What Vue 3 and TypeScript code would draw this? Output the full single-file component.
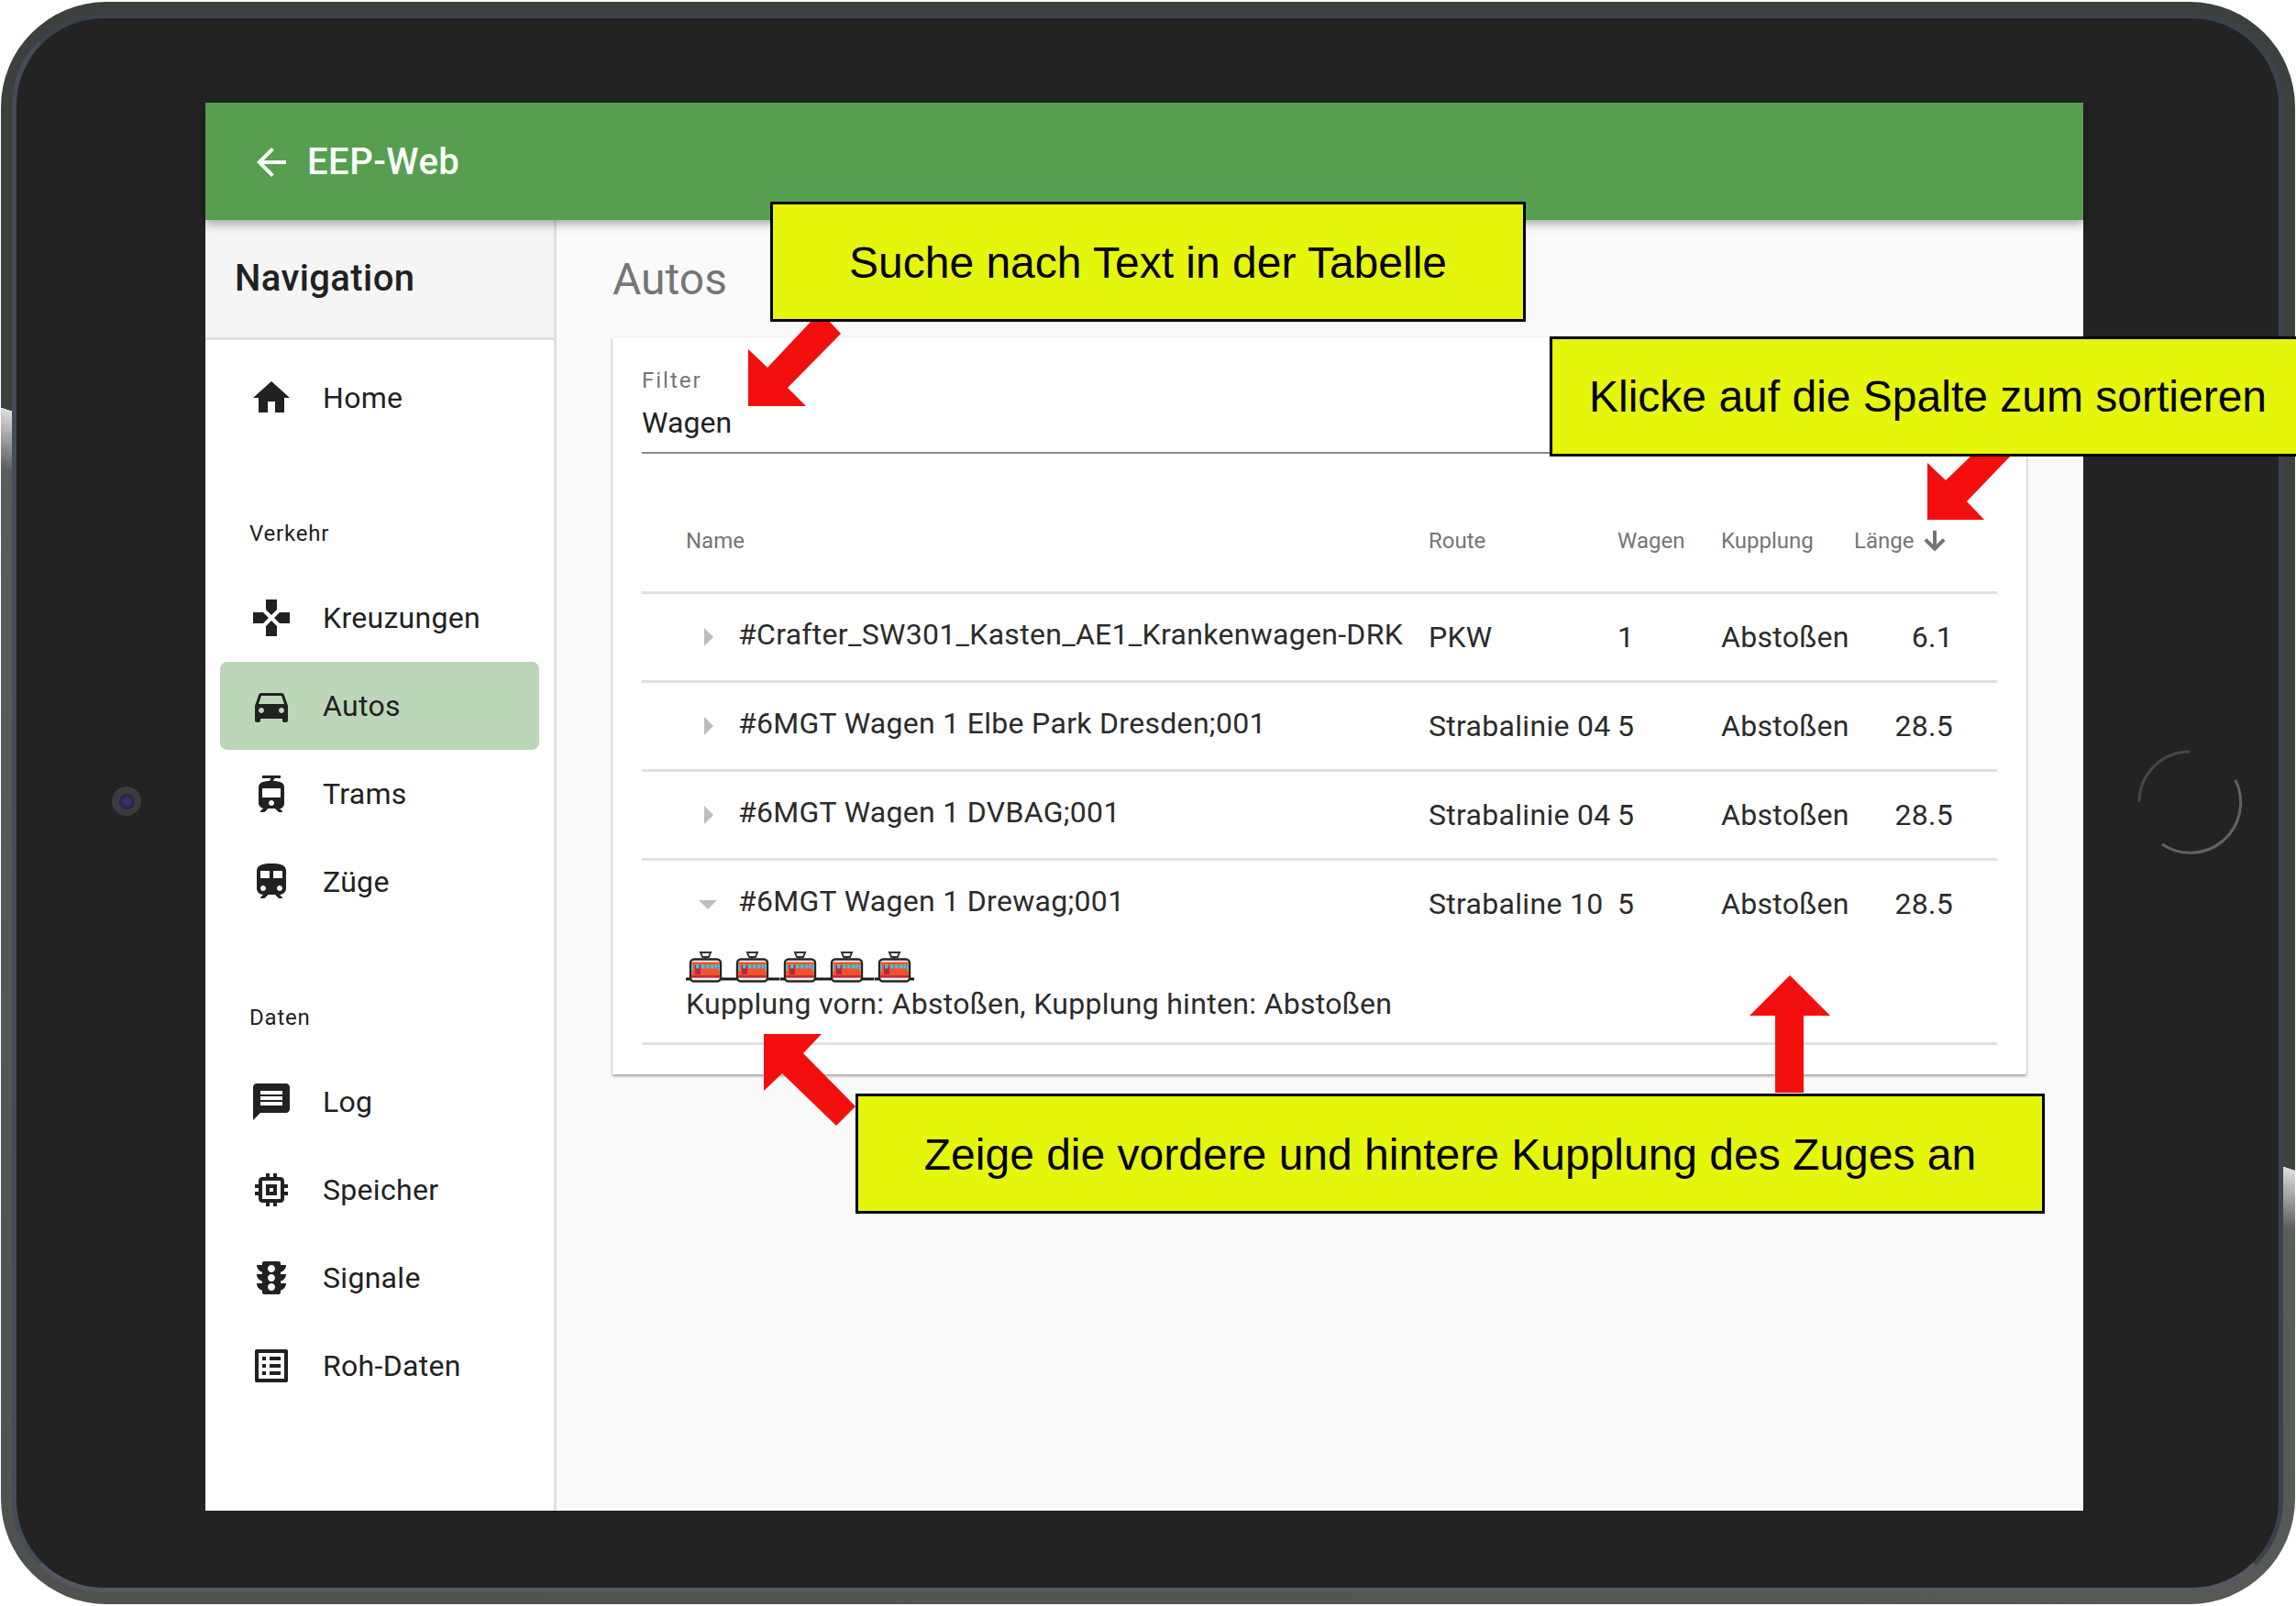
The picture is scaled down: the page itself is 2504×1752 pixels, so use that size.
<script setup lang="ts">
interface NavItem { label: string; path: string; active?: boolean }
interface Row { name: string; route: string; wagen: string; kupplung: string; laenge: string; open?: boolean }

const home: NavItem[] = [{ label: 'Home', path: 'M10 20v-6h4v6h5v-8h3L12 3 2 12h3v8z' }]
const verkehr: NavItem[] = [
  { label: 'Kreuzungen', path: 'M15 7.5V2H9v5.5l3 3 3-3zM7.5 9H2v6h5.5l3-3-3-3zM9 16.5V22h6v-5.5l-3-3-3 3zM16.5 9l-3 3 3 3H22V9h-5.5z' },
  { label: 'Autos', active: true, path: 'M18.92 6.01C18.72 5.42 18.16 5 17.5 5h-11c-.66 0-1.21.42-1.42 1.01L3 12v8c0 .55.45 1 1 1h1c.55 0 1-.45 1-1v-1h12v1c0 .55.45 1 1 1h1c.55 0 1-.45 1-1v-8l-2.08-5.99zM6.5 16c-.83 0-1.5-.67-1.5-1.5S5.67 13 6.5 13s1.5.67 1.5 1.5S7.33 16 6.5 16zm11 0c-.83 0-1.5-.67-1.5-1.5s.67-1.5 1.5-1.5 1.5.67 1.5 1.5-.67 1.5-1.5 1.5zM5 11l1.5-4.5h11L19 11H5z' },
  { label: 'Trams', path: 'M19 16.94V8.5c0-2.79-2.61-3.4-6.01-3.49l.76-1.51H17V2H7v1.5h4.75l-.76 1.52C7.86 5.11 5 5.73 5 8.5v8.44c0 1.45 1.19 2.66 2.59 2.97L6 21.5v.5h2.23l2-2H14l2 2h2v-.5L16.5 20h-.08c1.69 0 2.58-1.37 2.58-3.06zm-7 1.56c-.83 0-1.5-.67-1.5-1.5s.67-1.5 1.5-1.5 1.5.67 1.5 1.5-.67 1.5-1.5 1.5zm5-4.5H7V9h10v5z' },
  { label: 'Züge', path: 'M12 2c-4 0-8 .5-8 4v9.5C4 17.43 5.57 19 7.5 19L6 20.5v.5h2.23l2-2H14l2 2h2v-.5L16.5 19c1.93 0 3.5-1.57 3.5-3.5V6c0-3.5-3.58-4-8-4zM7.5 17c-.83 0-1.5-.67-1.5-1.5S6.67 14 7.5 14s1.5.67 1.5 1.5S8.33 17 7.5 17zm3.5-7H6V6h5v4zm2 0V6h5v4h-5zm3.5 7c-.83 0-1.5-.67-1.5-1.5s.67-1.5 1.5-1.5 1.5.67 1.5 1.5-.67 1.5-1.5 1.5z' },
]
const daten: NavItem[] = [
  { label: 'Log', path: 'M20 2H4c-1.1 0-1.99.9-1.99 2L2 22l4-4h14c1.1 0 2-.9 2-2V4c0-1.1-.9-2-2-2zm-2 12H6v-2h12v2zm0-3H6V9h12v2zm0-3H6V6h12v2z' },
  { label: 'Speicher', path: 'M15 9H9v6h6V9zm-2 4h-2v-2h2v2zm8-2V9h-2V7c0-1.1-.9-2-2-2h-2V3h-2v2h-2V3H9v2H7c-1.1 0-2 .9-2 2v2H3v2h2v2H3v2h2v2c0 1.1.9 2 2 2h2v2h2v-2h2v2h2v-2h2c1.1 0 2-.9 2-2v-2h2v-2h-2v-2h2zm-4 6H7V7h10v10z' },
  { label: 'Signale', path: 'M20 10h-3V8.86c1.72-.45 3-2 3-3.86h-3V4c0-.55-.45-1-1-1H8c-.55 0-1 .45-1 1v1H4c0 1.86 1.28 3.41 3 3.86V10H4c0 1.86 1.28 3.41 3 3.86V15H4c0 1.86 1.28 3.41 3 3.86V20c0 .55.45 1 1 1h8c.55 0 1-.45 1-1v-1.14c1.72-.45 3-2 3-3.86h-3v-1.14c1.72-.45 3-2 3-3.86zm-8 9c-1.11 0-2-.9-2-2s.89-2 2-2c1.1 0 2 .9 2 2s-.89 2-2 2zm0-5c-1.11 0-2-.9-2-2s.89-2 2-2c1.1 0 2 .9 2 2s-.89 2-2 2zm0-5c-1.11 0-2-.9-2-2 0-1.11.89-2 2-2 1.1 0 2 .89 2 2 0 1.1-.89 2-2 2z' },
  { label: 'Roh-Daten', path: 'M19 5v14H5V5h14m1.1-2H3.9c-.5 0-.9.4-.9.9v16.2c0 .4.4.9.9.9h16.2c.4 0 .9-.5.9-.9V3.9c0-.5-.5-.9-.9-.9zM11 7h6v2h-6V7zm0 4h6v2h-6v-2zm0 4h6v2h-6zM7 7h2v2H7zm0 4h2v2H7zm0 4h2v2H7z' },
]
const rows: Row[] = [
  { name: '#Crafter_SW301_Kasten_AE1_Krankenwagen-DRK', route: 'PKW', wagen: '1', kupplung: 'Abstoßen', laenge: '6.1' },
  { name: '#6MGT Wagen 1 Elbe Park Dresden;001', route: 'Strabalinie 04', wagen: '5', kupplung: 'Abstoßen', laenge: '28.5' },
  { name: '#6MGT Wagen 1 DVBAG;001', route: 'Strabalinie 04', wagen: '5', kupplung: 'Abstoßen', laenge: '28.5' },
  { name: '#6MGT Wagen 1 Drewag;001', route: 'Strabaline 10', wagen: '5', kupplung: 'Abstoßen', laenge: '28.5', open: true },
]
const trams = [0, 1, 2, 3, 4]
</script>

<template>
  <div class="page">
    <div class="device">
      <div class="bezel">
        <span class="camera"><span class="lens"></span></span>
        <svg class="home-button" width="120" height="120" viewBox="0 0 120 120">
          <path d="M5 60A55 55 0 0 1 60 5" fill="none" stroke="#474747" stroke-width="3" />
          <path d="M110 36A55 55 0 0 1 30 106" fill="none" stroke="#626262" stroke-width="3" />
        </svg>
        <div class="screen">
          <header class="appbar">
            <svg class="appbar-icon" viewBox="0 0 24 24"><path d="M20 11H7.83l5.59-5.59L12 4l-8 8 8 8 1.41-1.41L7.83 13H20v-2z" /></svg>
            <span class="appbar-title">EEP-Web</span>
          </header>
          <div class="body">
            <aside class="sidebar">
              <div class="nav-head">Navigation</div>
              <ul class="nav-list first">
                <li v-for="item in home" :key="item.label" class="nav-item">
                  <svg class="nav-icon" viewBox="0 0 24 24"><path :d="item.path" /></svg>
                  <span>{{ item.label }}</span>
                </li>
              </ul>
              <div class="nav-sub">Verkehr</div>
              <ul class="nav-list">
                <li v-for="item in verkehr" :key="item.label" class="nav-item" :class="{ active: item.active }">
                  <svg class="nav-icon" viewBox="0 0 24 24"><path :d="item.path" /></svg>
                  <span>{{ item.label }}</span>
                </li>
              </ul>
              <div class="nav-sub">Daten</div>
              <ul class="nav-list">
                <li v-for="item in daten" :key="item.label" class="nav-item">
                  <svg class="nav-icon" viewBox="0 0 24 24"><path :d="item.path" /></svg>
                  <span>{{ item.label }}</span>
                </li>
              </ul>
            </aside>
            <main class="main">
              <h1 class="title">Autos</h1>
              <section class="card">
                <div class="filter">
                  <label class="filter-label">Filter</label>
                  <div class="filter-value">Wagen</div>
                </div>
                <div class="grid head">
                  <div class="th name-head">Name</div>
                  <div class="th">Route</div>
                  <div class="th">Wagen</div>
                  <div class="th">Kupplung</div>
                  <div class="th sort">
                    Länge
                    <svg class="sort-icon" viewBox="0 0 24 24"><path d="M20 12l-1.41-1.41L13 16.17V4h-2v12.17l-5.58-5.59L4 12l8 8 8-8z" /></svg>
                  </div>
                </div>
                <div v-for="row in rows" :key="row.name" class="row" :class="{ open: row.open }">
                  <div class="grid cells">
                    <svg class="chevron" viewBox="0 0 24 24"><path :d="row.open ? 'M7 10l5 5 5-5z' : 'M10 17l5-5-5-5v10z'" /></svg>
                    <div class="td name">{{ row.name }}</div>
                    <div class="td">{{ row.route }}</div>
                    <div class="td">{{ row.wagen }}</div>
                    <div class="td">{{ row.kupplung }}</div>
                    <div class="td num">{{ row.laenge }}</div>
                  </div>
                  <div v-if="row.open" class="detail">
                    <div class="trams">
                      <svg v-for="t in trams" :key="t" class="tram" width="51.4" height="36" viewBox="0 0 51.4 36">
                        <rect x="0" y="29.5" width="51.4" height="3" fill="#1b1b1b" />
                        <path d="M16 2h11l-2 5h-7zM21 7v3" fill="#fff" stroke="#333" stroke-width="2" />
                        <rect x="5" y="9.5" width="33" height="24" rx="4" fill="#f4f4f4" stroke="#262626" stroke-width="2.4" />
                        <rect x="6.2" y="12.5" width="30.6" height="17" fill="#f4512a" />
                        <rect x="6.2" y="27" width="30.6" height="2.5" fill="#c22a38" />
                        <rect x="10" y="16" width="6" height="10" fill="#b5283c" />
                        <rect x="6.2" y="15" width="1.8" height="7" fill="#35c8e8" />
                        <rect x="35" y="15" width="1.8" height="7" fill="#35c8e8" />
                        <rect x="11" y="15" width="3.5" height="4.5" fill="#35c8e8" />
                        <rect x="17" y="15" width="3.5" height="4.5" fill="#35c8e8" />
                        <rect x="22" y="15" width="3.5" height="4.5" fill="#35c8e8" />
                        <rect x="27" y="15" width="3.5" height="4.5" fill="#35c8e8" />
                        <rect x="31.5" y="15" width="2.5" height="4.5" fill="#35c8e8" />
                      </svg>
                    </div>
                    <div class="coupling">Kupplung vorn: Abstoßen, Kupplung hinten: Abstoßen</div>
                  </div>
                </div>
              </section>
            </main>
          </div>
        </div>
      </div>
    </div>

    <svg class="arrows" width="2504" height="1752" viewBox="0 0 2504 1752">
      <polygon points="816,443 816,381 837,401 885,350 904,350 917,364 859,423 879,443" />
      <polygon points="2102,567 2102,505 2122,524 2150,497 2193,497 2145,547 2164,567" />
      <polygon points="1952,1064 1996,1108 1967,1108 1967,1192 1936,1192 1936,1108 1908,1108" />
      <polygon points="833,1128 896,1128 876,1149 933,1207 912,1228 853,1171 833,1190" />
    </svg>
    <div class="note note-search">Suche nach Text in der Tabelle</div>
    <div class="note note-sort">Klicke auf die Spalte zum sortieren</div>
    <div class="note note-coupling">Zeige die vordere und hintere Kupplung des Zuges an</div>
  </div>
</template>

<style scoped>
.page {
  position: relative;
  width: 2504px;
  height: 1752px;
  overflow: hidden;
  background: #fff;
  font-family: Roboto, "Liberation Sans", sans-serif;
  color: #212121;
}
.device {
  box-sizing: border-box;
  width: 2502px;
  height: 1748px;
  margin: 2px 0 0 1px;
  padding: 13px 13px 13px 12px;
  border-radius: 115px;
  background: linear-gradient(198.4deg, #3d413d 0%, #3d413d 49.4%, #dedede 49.4%, #5a5c5a 52%, #4f514f 100%);
}
.bezel {
  position: relative;
  box-sizing: border-box;
  height: 100%;
  padding: 92px 213px 84px 206px;
  border: 5px solid #3b424c;
  border-left-color: #454c58;
  border-bottom-color: #555862;
  border-radius: 100px;
  background: #232323;
}
.camera {
  position: absolute;
  left: 104px;
  top: 838px;
  display: flex;
  align-items: center;
  justify-content: center;
  width: 32px;
  height: 32px;
  border-radius: 50%;
  background: #3c3c3c;
}
.lens {
  width: 17px;
  height: 17px;
  border-radius: 50%;
  background: radial-gradient(circle, #3d3070 20%, #1f1a30 90%);
}
.home-button {
  position: absolute;
  left: 2310px;
  top: 795px;
}
.screen {
  display: flex;
  flex-direction: column;
  height: 100%;
  background: #fafafa;
}
.appbar {
  position: relative;
  z-index: 2;
  display: flex;
  align-items: center;
  flex: 0 0 128px;
  box-sizing: border-box;
  padding-left: 48px;
  background: #569f4f;
  box-shadow: 0 4px 10px rgba(0, 0, 0, 0.35);
  color: #fff;
}
.appbar-icon {
  width: 48px;
  height: 48px;
  margin-top: 2px;
  margin-right: 15px;
  fill: #fff;
}
.appbar-title {
  padding-top: 2px;
  font-size: 40px;
  font-weight: 500;
  line-height: 48px;
  letter-spacing: 0.5px;
}
.body {
  display: flex;
  flex: 1;
  min-height: 0;
}
.sidebar {
  flex: 0 0 380px;
  background: #fff;
  border-right: 3px solid #e0e0e0;
}
.nav-head {
  box-sizing: border-box;
  height: 131px;
  padding-left: 32px;
  background: #f5f5f5;
  border-bottom: 3px solid #e0e0e0;
  font-size: 40px;
  font-weight: 500;
  line-height: 128px;
  letter-spacing: 0.4px;
  color: #212121;
}
.nav-list {
  margin: 0;
  padding: 0 16px;
  list-style: none;
}
.nav-list.first {
  padding-top: 15px;
}
.nav-item {
  display: flex;
  align-items: center;
  height: 96px;
  border-radius: 8px;
  font-size: 32px;
  letter-spacing: 0.3px;
}
.nav-item.active {
  background: #bbd7b8;
}
.nav-icon {
  flex: 0 0 48px;
  width: 48px;
  height: 48px;
  margin: 0 32px;
  fill: #212121;
}
.nav-sub {
  box-sizing: border-box;
  height: 144px;
  padding: 82px 0 0 48px;
  font-size: 24px;
  line-height: 36px;
  letter-spacing: 0.8px;
}
.main {
  flex: 1;
  box-sizing: border-box;
  min-width: 0;
  padding-left: 61px;
}
.title {
  height: 128px;
  margin: 0;
  font-size: 48px;
  font-weight: 400;
  line-height: 130px;
  color: #757575;
}
.card {
  box-sizing: border-box;
  width: 1542px;
  height: 804px;
  padding: 0 32px;
  background: #fff;
  box-shadow: 0 2px 3px rgba(0, 0, 0, 0.35), 0 0 2px rgba(0, 0, 0, 0.1);
}
.filter {
  box-sizing: border-box;
  height: 127px;
  padding-top: 30px;
  border-bottom: 2px solid #8a8a8a;
}
.filter-label {
  display: block;
  font-size: 24px;
  line-height: 34px;
  letter-spacing: 2px;
  color: #757575;
}
.filter-value {
  margin-top: 7px;
  font-size: 32px;
  line-height: 44px;
  letter-spacing: 0.1px;
  color: #212121;
}
.grid {
  display: grid;
  grid-template-columns: 105px 753px 206px 113px 145px 156px;
}
.head {
  box-sizing: border-box;
  height: 153px;
  padding-top: 40px;
  align-items: center;
  border-bottom: 3px solid #e0e0e0;
}
.th {
  font-size: 24px;
  color: #757575;
  white-space: nowrap;
}
.name-head {
  grid-column: 1 / span 2;
  padding-left: 48px;
}
.sort {
  display: flex;
  align-items: center;
}
.sort-icon {
  width: 32px;
  height: 32px;
  margin-left: 7px;
  fill: #757575;
  stroke: #757575;
  stroke-width: 1;
}
.row {
  box-sizing: border-box;
  height: 97px;
  border-bottom: 3px solid #e0e0e0;
}
.row.open {
  height: 201px;
}
.cells {
  height: 94px;
  align-items: center;
}
.chevron {
  width: 48px;
  height: 48px;
  margin-left: 48px;
  fill: #bdbdbd;
}
.td {
  font-size: 32px;
  letter-spacing: 0.3px;
  white-space: nowrap;
  color: #2b2b2b;
}
.name {
  padding-bottom: 6px;
}
.num {
  box-sizing: border-box;
  padding-right: 48px;
  text-align: right;
}
.detail {
  padding-left: 48px;
}
.trams {
  display: flex;
  width: 249px;
  height: 36px;
  margin-top: 4px;
  overflow: hidden;
}
.tram {
  flex: 0 0 auto;
}
.coupling {
  margin-top: 2px;
  font-size: 32px;
  line-height: 40px;
  letter-spacing: 0.3px;
  color: #2b2b2b;
}
.arrows {
  position: absolute;
  inset: 0;
  z-index: 3;
  fill: #f40f0f;
  pointer-events: none;
}
.note {
  position: absolute;
  z-index: 4;
  box-sizing: border-box;
  display: flex;
  align-items: center;
  justify-content: center;
  border: 3px solid #000;
  background: #e6f50c;
  color: #000;
  font-family: "Liberation Sans", Arial, sans-serif;
  font-size: 48px;
  white-space: nowrap;
}
.note-search {
  left: 840px;
  top: 220px;
  width: 824px;
  height: 131px;
  padding-top: 2px;
}
.note-sort {
  left: 1690px;
  top: 367px;
  width: 830px;
  height: 131px;
  justify-content: flex-start;
  padding-left: 40px;
}
.note-coupling {
  left: 933px;
  top: 1193px;
  width: 1297px;
  height: 131px;
  padding-top: 2px;
}
</style>
